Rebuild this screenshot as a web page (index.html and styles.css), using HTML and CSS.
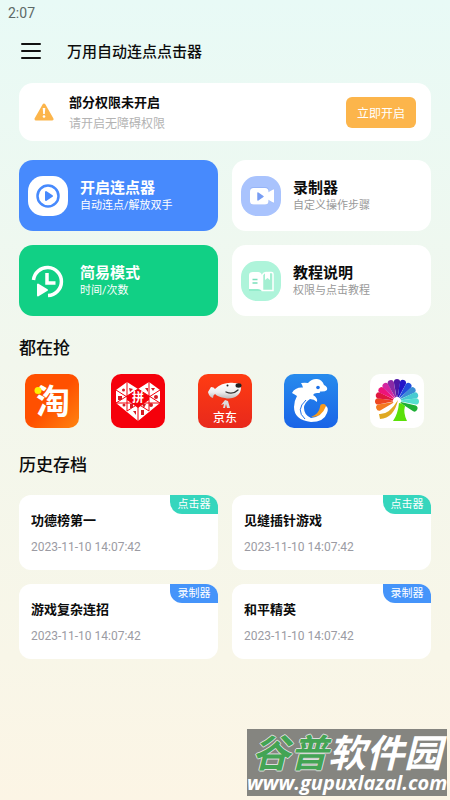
FILE: index.html
```html
<!DOCTYPE html>
<html lang="zh-CN">
<head>
    <meta charset="UTF-8">
    <meta name="viewport" content="width=device-width, initial-scale=1.0">
    <title>万用自动连点点击器</title>
    <link rel="stylesheet" href="styles.css">
</head>
<body>

    <div class="status-bar">2:07</div>

    <header class="header">
        <button class="menu-btn" aria-label="菜单">
            <svg width="20" height="18" viewBox="0 0 20 18"><path d="M1 2h18M1 9h18M1 16h18" stroke="#111" stroke-width="2" stroke-linecap="round"/></svg>
        </button>
        <h1>万用自动连点点击器</h1>
    </header>

    <main class="content">

        <section class="notice">
            <svg width="20" height="18" viewBox="0 0 20 18">
                <path d="M10 2 18 16H2Z" fill="#fcb54b" stroke="#fcb54b" stroke-width="3" stroke-linejoin="round"/>
                <path d="M8.700 5h2.600l-.5 6H9.200Z" fill="#fff"/>
                <circle cx="10" cy="13.500" r="1.300" fill="#fff"/>
            </svg>
            <div class="notice-text">
                <h2>部分权限未开启</h2>
                <p>请开启无障碍权限</p>
            </div>
            <button class="open-btn">立即开启</button>
        </section>

        <nav class="modes">
            <a href="#" class="mode blue">
                <svg width="40" height="40" viewBox="0 0 40 40">
                    <rect width="40" height="40" rx="15" fill="#fff"/>
                    <circle cx="20" cy="20" r="10.500" fill="none" stroke="#478afd" stroke-width="2.500"/>
                    <path d="M18 16v8l6-4Z" fill="#478afd" stroke="#478afd" stroke-width="2" stroke-linejoin="round"/>
                </svg>
                <span class="mode-text"><strong>开启连点器</strong><small>自动连点/解放双手</small></span>
            </a>
            <a href="#" class="mode">
                <svg width="40" height="40" viewBox="0 0 40 40">
                    <rect width="40" height="40" rx="16" fill="#a9c3fd"/>
                    <path d="M12 11h12q4 0 4 4v1l4-3q1-.5 1 .5v13q0 1-1 .5l-4-3q0 5-4 5H13q-4 0-4-4V15q0-4 3-4Z" fill="#83a5f3" opacity=".5"/>
                    <rect x="9" y="12" width="18.500" height="16.500" rx="3.500" fill="#fff"/>
                    <path d="m26 17 6-3.500q1-.5 1 .5v12q0 1-1 .5L26 23Z" fill="#fff"/>
                    <path d="M17 17v7l5-3.500Z" fill="#789df3" stroke="#789df3" stroke-width="1.500" stroke-linejoin="round"/>
                </svg>
                <span class="mode-text"><strong>录制器</strong><small>自定义操作步骤</small></span>
            </a>
            <a href="#" class="mode green">
                <svg width="40" height="40" viewBox="0 0 40 40">
                    <path d="M5.500 19A14 14 0 1 1 20 34.500" fill="none" stroke="#fff" stroke-width="3.500"/>
                    <path d="M19 12v10h8.500" fill="none" stroke="#fff" stroke-width="3.500"/>
                    <path d="M10 23.500v11l9-5.500Z" fill="#fff" stroke="#fff" stroke-width="2" stroke-linejoin="round"/>
                </svg>
                <span class="mode-text"><strong>简易模式</strong><small>时间/次数</small></span>
            </a>
            <a href="#" class="mode">
                <svg width="40" height="40" viewBox="0 0 40 40">
                    <rect width="40" height="40" rx="16" fill="#aef4da"/>
                    <path d="M8 14q5-6 12 0 6-6 12-1v17H8Z" fill="#72e2b9" opacity=".45"/>
                    <path d="M8 14q0-3 4-3h5q3 0 4 3v16q-2-2-4-2H8Z" fill="#fff"/>
                    <path d="M21.500 14q1-2.500 4-2.500h5q1.500 0 1.500 1.500v16.500H21.500Z" fill="#a4efd2" stroke="#fff" stroke-width="1.500"/>
                    <path d="M24 11h5v8l-2.500-2-2.500 2Z" fill="#fff"/>
                    <path d="M11.500 18.500h5m-5 3.500h5" stroke="#79dfba" stroke-width="1.500"/>
                </svg>
                <span class="mode-text"><strong>教程说明</strong><small>权限与点击教程</small></span>
            </a>
        </nav>

        <h2 class="section-title">都在抢</h2>
        <div class="apps">
            <a href="#" aria-label="淘宝">
                <svg width="54" height="54" viewBox="0 0 54 54">
                    <defs><linearGradient id="tao" x1="0" y1="0" x2="1" y2="1"><stop offset=".5" stop-color="#ff5000"/><stop offset="1" stop-color="#ff8410"/></linearGradient></defs>
                    <rect width="54" height="54" rx="10" fill="url(#tao)"/>
                    <text x="11" y="40" class="tao-text">淘</text>
                    <circle cx="13" cy="16.500" r="3.500" fill="#fff100"/>
                </svg>
            </a>
            <a href="#" aria-label="拼多多">
                <svg width="54" height="54" viewBox="0 0 54 54">
                    <rect width="54" height="54" rx="10" fill="#f5000b"/>
                    <path d="M16 8 27 15 38 8 49 16V29L27 47 5 29V16Z" fill="#fff"/>
                    <path d="M16 8v29M38 8v29M5 16l22 14 22-14M5 29l22-14 22 14M27 30v17M5 29h44M16 37l11-7 11 7" fill="none" stroke="#f5000b" stroke-width="1"/>
                    <path d="m27 15 11 7v4l-11 8-11-8v-4Z" fill="#f5000b"/>
                    <text x="21" y="28" class="pin-text">拼</text>
                    <g fill="#d51b23">
                        <circle cx="12.500" cy="16" r="1.500"/><path d="m18 14 4 1-3 3ZM34 14h3v4ZM40 14h4l-2 3ZM7 22h4v4H7Z"/>
                        <circle cx="45" cy="23" r="2"/><circle cx="40" cy="31" r="2"/><circle cx="13" cy="31" r="1.500"/>
                        <path d="M19 30h3v4h-3ZM31 30h4l-2 4ZM22 37h3v4ZM30 36h3v5h-3Z"/>
                    </g>
                </svg>
            </a>
            <a href="#" aria-label="京东">
                <svg width="54" height="54" viewBox="0 0 54 54">
                    <defs>
                        <linearGradient id="jd" x1="0" y1="0" x2="0" y2="1"><stop stop-color="#ff3c12"/><stop offset="1" stop-color="#e8291c"/></linearGradient>
                        <linearGradient id="dog" x1="0" y1="0" x2="0" y2="1"><stop stop-color="#fff"/><stop offset=".6" stop-color="#eee"/><stop offset="1" stop-color="#bbb"/></linearGradient>
                    </defs>
                    <rect width="54" height="54" rx="10" fill="url(#jd)"/>
                    <path d="M17 15C22 10 29 8 36 9q7 0 7 5c0 8-9 12-16 10q-7-1-10-4-2 1-2 4-4-1-5-6l3-5q3 0 4 2Z" fill="url(#dog)"/>
                    <ellipse cx="40.500" cy="11.500" rx="3" ry="2.200" fill="#222"/>
                    <circle cx="29.500" cy="11.500" r="1" fill="#222"/>
                    <path d="M28 18q7 3 12-2" fill="none" stroke="#333" stroke-width="1.300" stroke-linecap="round"/>
                    <path d="m27 26 3 1 2 7h-3l-1-4-1 4h-2l1-4-3 1Z" fill="#ddd"/>
                    <text x="15" y="48" class="jd-text">京东</text>
                </svg>
            </a>
            <a href="#" aria-label="携程">
                <svg width="54" height="54" viewBox="0 0 54 54">
                    <defs><linearGradient id="trip" x1="0" y1="0" x2="0" y2="1"><stop stop-color="#278bed"/><stop offset="1" stop-color="#1964e7"/></linearGradient></defs>
                    <rect width="54" height="54" rx="10" fill="url(#trip)"/>
                    <path d="M36 33q0-3 3-3 4 0 3 5-4 8-15 8 8-3 9-10Z" fill="#f79a1c"/>
                    <path d="M8 19Q11 13 19 13.500 18 10 17 9 21 8.500 24 9 28 4.500 33 5 38 5.500 40 11 44 13 43 16 41 18 36 17.500 37 19 33 19 30 19 29 21 34 24 33 28 30 25 26 25 20 29 20 34 20 41 27 44 38 43 42 32 45 34 43 39 40 48 27 48 10 46 10 33 10 27 13 22 10 20 8 19Z" fill="#fff"/>
                    <path d="M22 26q-11 10-1 19" fill="none" stroke="#2373e8" stroke-width="1"/>
                    <circle cx="34" cy="13.500" r="1.800" fill="#1d70e8"/>
                </svg>
            </a>
            <a href="#" aria-label="大麦">
                <svg width="54" height="54" viewBox="0 0 54 54">
                    <defs><path id="petal" d="M-.5-4-3.200-19Q-3-22 0-22T3.200-19L.5-4Z"/></defs>
                    <rect width="54" height="54" rx="10" fill="#fff"/>
                    <g transform="translate(27 27)">
                        <use href="#petal" fill="#f47a20" transform="rotate(-110)"/>
                        <use href="#petal" fill="#ee4722" transform="rotate(-91)"/>
                        <use href="#petal" fill="#df1740" transform="rotate(-73)"/>
                        <use href="#petal" fill="#ed1379" transform="rotate(-55)"/>
                        <use href="#petal" fill="#d326a1" transform="rotate(-37)"/>
                        <use href="#petal" fill="#8a2aa5" transform="rotate(-19)"/>
                        <use href="#petal" fill="#4d17a4"/>
                        <use href="#petal" fill="#2414c8" transform="rotate(18)"/>
                        <use href="#petal" fill="#214ddd" transform="rotate(37)"/>
                        <use href="#petal" fill="#3b8ed5" transform="rotate(55)"/>
                        <use href="#petal" fill="#48cbd1" transform="rotate(73)"/>
                        <use href="#petal" fill="#54dfcf" transform="rotate(91)"/>
                        <use href="#petal" fill="#1eaf36" transform="rotate(113)"/>
                    </g>
                    <path d="M28 26Q24 44 10 45L9 40q10 1 19-14Z" fill="#dfa923"/>
                    <path d="M29 29q3 0 6 3-2 7 2 15H23q5-7 6-18Z" fill="#5be009"/>
                </svg>
            </a>
        </div>

        <h2 class="section-title">历史存档</h2>
        <div class="history">
            <article class="record">
                <h3>功德榜第一</h3>
                <time>2023-11-10 14:07:42</time>
                <span class="tag click">点击器</span>
            </article>
            <article class="record">
                <h3>见缝插针游戏</h3>
                <time>2023-11-10 14:07:42</time>
                <span class="tag click">点击器</span>
            </article>
            <article class="record">
                <h3>游戏复杂连招</h3>
                <time>2023-11-10 14:07:42</time>
                <span class="tag rec">录制器</span>
            </article>
            <article class="record">
                <h3>和平精英</h3>
                <time>2023-11-10 14:07:42</time>
                <span class="tag rec">录制器</span>
            </article>
        </div>
    </main>

    <div class="watermark">
        <div class="mark-name"><span>谷普</span>软件园</div>
        <div class="mark-url">www.gupuxlazal.com</div>
    </div>

</body>
</html>
```

FILE: styles.css
```css
*{
    margin: 0;
    padding: 0;
    box-sizing: border-box;
}

body{
    position: relative;
    min-height: 100vh;
    background: linear-gradient(to bottom, #e8faf6, #f2f7ed 45%, #f8f6e8 82%, #fcf5e5);
    font-family: Roboto, "Noto Sans CJK SC", sans-serif;
    font-size: 12px;
    line-height: 18px;
    color: #0c0c0c;
}

a{
    color: inherit;
    text-decoration: none;
}

button{
    border: none;
    cursor: pointer;
    font-family: inherit;
}

svg{
    display: block;
    flex: none;
}

h1, h2, h3, strong{
    font-weight: 700;
}

.status-bar{
    padding: 4px 8px;
    font-size: 14px;
    color: #5d6966;
}

.header{
    display: flex;
    align-items: center;
    gap: 26px;
    height: 50px;
    padding: 0 21px;
}

.header h1{
    font-size: 15px;
    font-weight: 500;
    padding-top: 2px;
}

.menu-btn{
    background: none;
}

.content{
    padding: 7px 19px 24px;
}

.notice{
    display: flex;
    align-items: center;
    height: 58px;
    padding: 0 15px;
    background-color: white;
    border-radius: 14px;
}

.notice-text{
    flex: 1;
    margin-left: 15px;
    padding-top: 2px;
}

.notice h2{
    font-size: 13px;
    line-height: 22px;
}

.notice p{
    line-height: 20px;
    color: #b3b3b3;
}

.open-btn{
    height: 31px;
    padding: 0 11px;
    border-radius: 6px;
    background-color: #fcb54b;
    color: white;
    font-size: 12px;
}

.modes, .history{
    display: grid;
    grid-template-columns: 1fr 1fr;
    gap: 14px;
}

.modes{
    margin-top: 19px;
}

.mode{
    display: flex;
    align-items: center;
    gap: 12px;
    height: 71px;
    padding: 0 9px;
    border-radius: 14px;
    background-color: white;
}

.mode-text{
    padding-top: 3px;
}

.mode strong{
    display: block;
    font-size: 15px;
    line-height: 18px;
}

.mode small{
    display: block;
    font-size: 11px;
    color: #999;
}

.mode.blue{
    background-color: #478afd;
    color: white;
}

.mode.green{
    background-color: #11d085;
    color: white;
}

.mode.blue small, .mode.green small{
    color: white;
}

.section-title{
    margin: 19px 0 12px;
    font-size: 17px;
    font-weight: 500;
    line-height: 27px;
}

.apps{
    display: flex;
    justify-content: space-between;
    padding: 0 7px 0 6px;
}

.tao-text, .pin-text, .jd-text{
    font-family: "Noto Sans CJK SC", sans-serif;
    font-weight: 700;
    fill: white;
}

.tao-text{
    font-size: 34px;
}

.pin-text{
    font-size: 12px;
}

.jd-text{
    font-size: 12px;
    font-weight: 500;
}

.apps + .section-title{
    margin: 24px 0 16px;
}

.record{
    position: relative;
    height: 75px;
    padding: 15px 12px;
    border-radius: 12px;
    background-color: white;
    overflow: hidden;
}

.record h3{
    font-size: 13px;
    line-height: 22px;
}

.record time{
    display: block;
    margin-top: 6px;
    color: #9b9ba3;
}

.tag{
    position: absolute;
    top: 0;
    right: 0;
    width: 48px;
    height: 19px;
    border-bottom-left-radius: 12px;
    color: white;
    font-size: 11px;
    line-height: 20px;
    text-align: center;
}

.click{
    background-color: #35d6bd;
}

.rec{
    background-color: #4594fa;
}

.watermark{
    position: absolute;
    right: 3px;
    bottom: 4px;
    width: 200px;
    height: 67px;
    background-color: #858580;
    color: white;
    font-style: italic;
    font-weight: 700;
    text-align: center;
    white-space: nowrap;
}

.mark-name{
    font-family: "Noto Sans CJK SC", sans-serif;
    font-size: 38px;
    line-height: 44px;
}

.mark-name span{
    color: #43a454;
    text-shadow: 1px 0 #ddd, -1px 0 #ddd, 0 1px #ddd, 0 -1px #ddd;
}

.mark-url{
    font-family: "Open Sans", sans-serif;
    font-size: 20px;
    line-height: 20px;
}
```
